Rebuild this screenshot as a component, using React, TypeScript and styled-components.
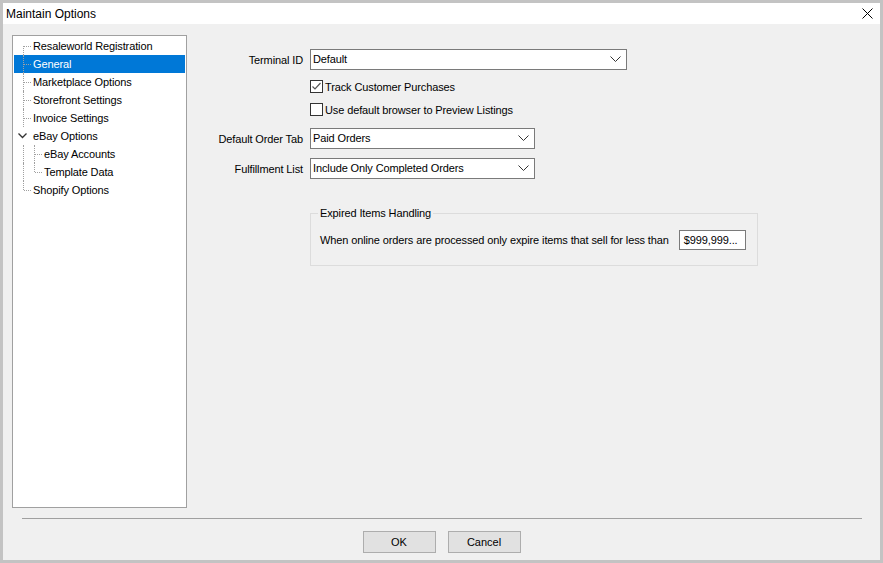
import React from "react";
import styled, { createGlobalStyle } from "styled-components";

const GlobalStyle = createGlobalStyle`
  html, body {
    margin: 0;
    padding: 0;
    background: #f0f0f0;
  }
  body {
    font-family: "Liberation Sans", Arial, sans-serif;
    font-size: 11px;
    letter-spacing: -0.12px;
    color: #000;
  }
`;

const Window = styled.div`
  width: 883px;
  height: 563px;
  box-sizing: border-box;
  border: 3px solid #c3c3c3;
  display: flex;
  flex-direction: column;
  background: #f0f0f0;
`;

const TitleBar = styled.div`
  height: 21px;
  background: #fff;
  display: flex;
  align-items: center;
  justify-content: space-between;
  padding: 0 7px 0 3px;
  font-size: 12px;
  letter-spacing: 0;
`;

const CloseGlyph = styled.svg`
  width: 11px;
  height: 11px;
`;

const Body = styled.div`
  flex: 1;
  display: flex;
  flex-direction: column;
  padding: 11px 0 7px 0;
`;

const Main = styled.div`
  flex: 1;
  display: flex;
  padding-left: 9px;
`;

const Tree = styled.div`
  width: 175px;
  box-sizing: border-box;
  border: 1px solid #a0a0a0;
  background: #fff;
  padding: 1px 0 0 1px;
`;

const Row = styled.div<{ $selected?: boolean }>`
  height: 18px;
  width: 171px;
  display: flex;
  align-items: center;
  background: ${({ $selected }) => ($selected ? "#0078d7" : "transparent")};
  color: ${({ $selected }) => ($selected ? "#fff" : "#000")};
  white-space: nowrap;
`;

const Indent = styled.span<{ $line?: boolean }>`
  align-self: stretch;
  width: 11px;
  flex: none;
  position: relative;
  &::before {
    content: "";
    display: ${({ $line }) => ($line ? "block" : "none")};
    position: absolute;
    left: 9px;
    top: 0;
    bottom: 0;
    border-left: 1px dotted #a0a0a0;
  }
`;

const Connector = styled.span<{ $up?: boolean; $down?: boolean }>`
  align-self: stretch;
  width: 19px;
  flex: none;
  position: relative;
  &::before {
    content: "";
    position: absolute;
    left: 9px;
    top: ${({ $up }) => ($up ? "0" : "9px")};
    bottom: ${({ $down }) => ($down ? "0" : "9px")};
    border-left: 1px dotted #a0a0a0;
  }
  &::after {
    content: "";
    position: absolute;
    left: 10px;
    top: 9px;
    width: 7px;
    border-top: 1px dotted #a0a0a0;
  }
`;

const Expander = styled.span`
  align-self: stretch;
  width: 19px;
  flex: none;
  display: flex;
  align-items: center;
  padding-left: 4px;
  box-sizing: border-box;
`;

const Form = styled.div`
  flex: 1;
  display: flex;
  flex-direction: column;
  padding-top: 14px;
`;

const FieldRow = styled.div<{ $gap?: number }>`
  display: flex;
  align-items: center;
  margin-top: ${({ $gap }) => $gap ?? 0}px;
`;

const Label = styled.span`
  width: 116px;
  margin-right: 7px;
  text-align: right;
  flex: none;
`;

const Spacer = styled.span`
  width: 123px;
  flex: none;
`;

const Select = styled.div<{ $width: number }>`
  width: ${({ $width }) => $width}px;
  height: 21px;
  box-sizing: border-box;
  border: 1px solid #7a7a7a;
  background: #fff;
  display: flex;
  align-items: center;
  justify-content: space-between;
  padding: 0 5px 1px 2px;
`;

const Chevron = styled.svg`
  width: 11px;
  height: 6px;
`;

const CheckBox = styled.span`
  width: 13px;
  height: 13px;
  box-sizing: border-box;
  border: 1px solid #333;
  background: #fff;
  margin-right: 2px;
  display: flex;
  align-items: center;
  justify-content: center;
`;

const Group = styled.fieldset`
  margin: 28px 0 0 123px;
  width: 448px;
  box-sizing: border-box;
  border: 1px solid #dcdcdc;
  padding: 11px 9px 15px 9px;
`;

const Legend = styled.legend`
  padding: 0 2px;
  margin-left: -2px;
`;

const GroupRow = styled.div`
  display: flex;
  align-items: center;
  gap: 10px;
  white-space: nowrap;
`;

const TextBox = styled.div`
  width: 67px;
  height: 20px;
  box-sizing: border-box;
  border: 1px solid #7a7a7a;
  background: #fff;
  padding-left: 4px;
  display: flex;
  align-items: center;
`;

const Divider = styled.div`
  height: 1px;
  background: #a0a0a0;
  margin: 10px 18px 12px 19px;
`;

const Buttons = styled.div`
  display: flex;
  justify-content: center;
  gap: 12px;
`;

const Button = styled.button`
  width: 73px;
  height: 22px;
  box-sizing: border-box;
  border: 1px solid #adadad;
  background: #e1e1e1;
  font: inherit;
  color: #000;
  padding: 0;
`;

type Node = {
  label: string;
  level: number;
  up?: boolean;
  down?: boolean;
  parentLine?: boolean;
  expander?: boolean;
  selected?: boolean;
};

const nodes: Node[] = [
  { label: "Resaleworld Registration", level: 0, down: true },
  { label: "General", level: 0, up: true, down: true, selected: true },
  { label: "Marketplace Options", level: 0, up: true, down: true },
  { label: "Storefront Settings", level: 0, up: true, down: true },
  { label: "Invoice Settings", level: 0, up: true, down: true },
  { label: "eBay Options", level: 0, expander: true },
  { label: "eBay Accounts", level: 1, up: true, down: true, parentLine: true },
  { label: "Template Data", level: 1, up: true, parentLine: true },
  { label: "Shopify Options", level: 0, up: true },
];

const DownChevron = () => (
  <Chevron viewBox="0 0 11 6">
    <path d="M0.5 0.5 L5.5 5.5 L10.5 0.5" fill="none" stroke="#333" strokeWidth="1" />
  </Chevron>
);

const ComboBox = ({ value, width }: { value: string; width: number }) => (
  <Select $width={width}>
    <span>{value}</span>
    <DownChevron />
  </Select>
);

const Check = ({ checked }: { checked?: boolean }) => (
  <CheckBox>
    {checked && (
      <svg width="11" height="11" viewBox="0 0 11 11">
        <path d="M1.5 5.5 L4 8 L9.5 2" fill="none" stroke="#555" strokeWidth="1.2" />
      </svg>
    )}
  </CheckBox>
);

export default function App() {
  return (
    <>
      <GlobalStyle />
      <Window>
        <TitleBar>
          <span>Maintain Options</span>
          <CloseGlyph viewBox="0 0 11 11">
            <path d="M0.5 0.5 L10.5 10.5 M10.5 0.5 L0.5 10.5" stroke="#000" strokeWidth="1" />
          </CloseGlyph>
        </TitleBar>
        <Body>
          <Main>
            <Tree>
              {nodes.map((n) => (
                <Row key={n.label} $selected={n.selected}>
                  {n.level > 0 && <Indent $line={n.parentLine} />}
                  {n.expander ? (
                    <Expander>
                      <svg width="9" height="6" viewBox="0 0 9 6">
                        <path d="M0.5 0.5 L4.5 4.5 L8.5 0.5" fill="none" stroke="#333" strokeWidth="1.3" />
                      </svg>
                    </Expander>
                  ) : (
                    <Connector $up={n.up} $down={n.down} />
                  )}
                  <span>{n.label}</span>
                </Row>
              ))}
            </Tree>
            <Form>
              <FieldRow>
                <Label>Terminal ID</Label>
                <ComboBox value="Default" width={317} />
              </FieldRow>
              <FieldRow $gap={10}>
                <Spacer />
                <Check checked />
                <span>Track Customer Purchases</span>
              </FieldRow>
              <FieldRow $gap={10}>
                <Spacer />
                <Check />
                <span>Use default browser to Preview Listings</span>
              </FieldRow>
              <FieldRow $gap={12}>
                <Label>Default Order Tab</Label>
                <ComboBox value="Paid Orders" width={225} />
              </FieldRow>
              <FieldRow $gap={9}>
                <Label>Fulfillment List</Label>
                <ComboBox value="Include Only Completed Orders" width={225} />
              </FieldRow>
              <Group>
                <Legend>Expired Items Handling</Legend>
                <GroupRow>
                  <span>When online orders are processed only expire items that sell for less than</span>
                  <TextBox>$999,999...</TextBox>
                </GroupRow>
              </Group>
            </Form>
          </Main>
          <Divider />
          <Buttons>
            <Button>OK</Button>
            <Button>Cancel</Button>
          </Buttons>
        </Body>
      </Window>
    </>
  );
}
